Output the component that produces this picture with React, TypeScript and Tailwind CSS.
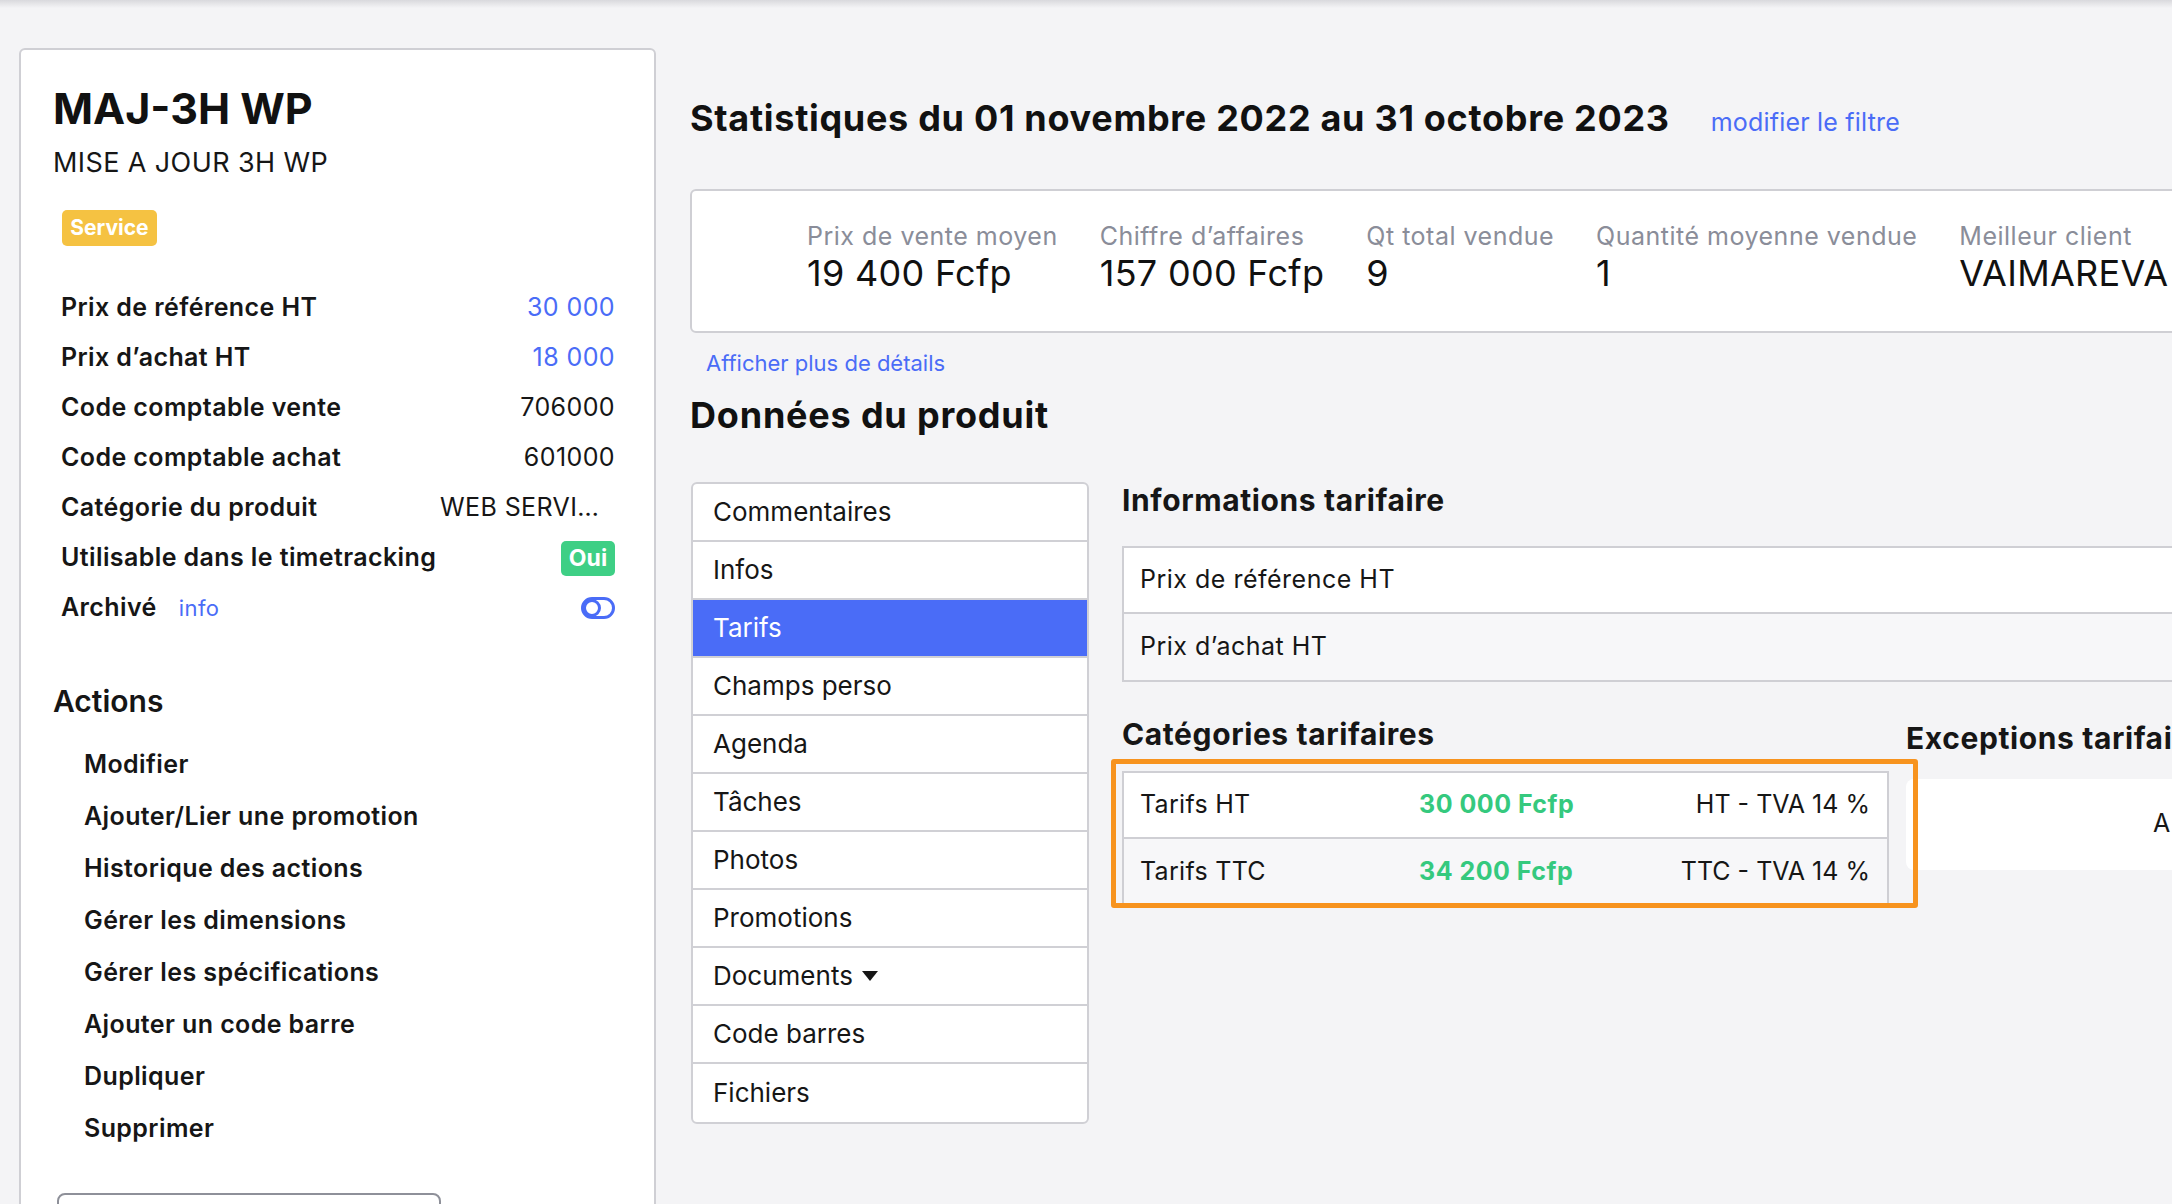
import React from "react";

const rows: { label: string; value: React.ReactNode }[] = [
  { label: "Prix de référence HT", value: <span className="text-[#4a6cf7]">30 000</span> },
  { label: "Prix d’achat HT", value: <span className="text-[#4a6cf7]">18 000</span> },
  { label: "Code comptable vente", value: <span>706000</span> },
  { label: "Code comptable achat", value: <span>601000</span> },
  {
    label: "Catégorie du produit",
    value: <span className="mr-[15px] block w-[160px] truncate">WEB SERVICES WORDPRESS</span>,
  },
  {
    label: "Utilisable dans le timetracking",
    value: (
      <span className="flex h-[35px] w-[54px] items-center justify-center rounded-[5px] bg-[#3ecf85] text-[23px] font-bold tracking-normal text-white">
        Oui
      </span>
    ),
  },
];

const actions = [
  "Modifier",
  "Ajouter/Lier une promotion",
  "Historique des actions",
  "Gérer les dimensions",
  "Gérer les spécifications",
  "Ajouter un code barre",
  "Dupliquer",
  "Supprimer",
];

const tabs = [
  "Commentaires",
  "Infos",
  "Tarifs",
  "Champs perso",
  "Agenda",
  "Tâches",
  "Photos",
  "Promotions",
  "Documents",
  "Code barres",
  "Fichiers",
];

const stats = [
  { label: "Prix de vente moyen", value: "19 400 Fcfp" },
  { label: "Chiffre d’affaires", value: "157 000 Fcfp" },
  { label: "Qt total vendue", value: "9" },
  { label: "Quantité moyenne vendue", value: "1" },
  { label: "Meilleur client", value: "VAIMAREVA" },
];

function Toggle() {
  return (
    <svg width="34" height="22" viewBox="0 0 34 22" fill="none">
      <rect x="1.5" y="1.5" width="31" height="19" rx="9.5" stroke="#4a6cf7" strokeWidth="3" />
      <circle cx="11" cy="11" r="7.5" stroke="#4a6cf7" strokeWidth="3" />
    </svg>
  );
}

function LeftCard() {
  return (
    <div className="w-[637px] shrink-0 rounded-[6px] border-2 border-[#cfcfd4] bg-white pb-[60px] pl-[32px] pr-[39px] pt-[32px]">
      <div className="text-[43px] font-bold leading-[52px] text-[#111]">MAJ-3H WP</div>
      <div className="mt-[12px] text-[27px] leading-[34px] tracking-[0.4px] text-[#161616]">MISE A JOUR 3H WP</div>
      <div className="ml-[9px] mt-[30px] flex h-[36px] w-[95px] items-center justify-center rounded-[5px] bg-[#f5c242] text-[21px] font-bold text-white">
        Service
      </div>
      <div className="ml-[8px] mt-[37px]">
        {rows.map((r) => (
          <div key={r.label} className="flex h-[50px] items-center justify-between text-[25px] tracking-[0.4px]">
            <span className="font-semibold">{r.label}</span>
            {r.value}
          </div>
        ))}
        <div className="flex h-[50px] items-center justify-between text-[25px] tracking-[0.4px]">
          <span className="flex items-baseline">
            <span className="font-semibold">Archivé</span>
            <span className="ml-[22px] text-[22px] text-[#4a6cf7]">info</span>
          </span>
          <Toggle />
        </div>
      </div>
      <div className="mt-[48px] text-[30px] font-semibold leading-[40px]">Actions</div>
      <div className="mt-[18px] pl-[31px]">
        {actions.map((a) => (
          <div key={a} className="flex h-[52px] items-center text-[25px] font-semibold tracking-[0.4px]">
            {a}
          </div>
        ))}
      </div>
      <div className="ml-[4px] mt-[38px] flex h-[44px] w-[384px] items-center rounded-[8px] border-2 border-[#8e9099] px-[14px] pt-[18px] text-[20px] text-[#9a9ca5]">
        ABONNEMENT ET MISE A JOUR
      </div>
    </div>
  );
}

function Tabs() {
  return (
    <div className="ml-[1px] w-[398px] shrink-0 self-start overflow-hidden rounded-[6px] border-2 border-[#d0d0d5] bg-white">
      {tabs.map((t, i) => (
        <div
          key={t}
          className={
            "flex h-[58px] items-center pl-[20px] text-[26px] " +
            (i < tabs.length - 1 ? "border-b-2 border-[#d0d0d5] " : "") +
            (t === "Tarifs" ? "bg-[#4a6cf7] text-white" : "text-[#161616]")
          }
        >
          {t}
          {t === "Documents" && (
            <svg className="ml-[9px]" width="16" height="10" viewBox="0 0 16 10">
              <path d="M0 0 L16 0 L8 10 Z" fill="#161616" />
            </svg>
          )}
        </div>
      ))}
    </div>
  );
}

function PriceSection() {
  return (
    <div className="flex flex-col">
      <div className="text-[30px] font-bold leading-[36px] tracking-[0.6px]">Informations tarifaire</div>
      <div className="mt-[28px] w-[1200px] border-2 border-[#cfcfd4]">
        <div className="flex h-[66px] items-center border-b-2 border-[#cfcfd4] bg-white pl-[16px] text-[25px] tracking-[0.5px]">
          Prix de référence HT
        </div>
        <div className="flex h-[66px] items-center bg-[#f7f7f9] pl-[16px] text-[25px] tracking-[0.5px]">Prix d’achat HT</div>
      </div>
      <div className="mt-[34px] flex gap-[17px]">
        <div className="relative w-[767px] shrink-0">
          <div className="text-[30px] font-bold leading-[36px] tracking-[0.6px]">Catégories tarifaires</div>
          <div className="mt-[19px] border-2 border-[#cfcfd4]">
            <div className="flex h-[66px] items-center border-b-2 border-[#cfcfd4] bg-white pl-[16px] pr-[17px] text-[25px] tracking-[0.3px]">
              <span className="w-[279px]">Tarifs HT</span>
              <span className="flex-1 font-bold tracking-[0.5px] text-[#35c97e]">30 000 Fcfp</span>
              <span className="tracking-normal">HT - TVA 14 %</span>
            </div>
            <div className="flex h-[66px] items-center bg-[#f7f7f9] pl-[16px] pr-[17px] text-[25px] tracking-[0.3px]">
              <span className="w-[279px]">Tarifs TTC</span>
              <span className="flex-1 font-bold tracking-[0.5px] text-[#35c97e]">34 200 Fcfp</span>
              <span className="tracking-normal">TTC - TVA 14 %</span>
            </div>
          </div>
          <div className="pointer-events-none absolute left-[-11px] top-[43px] h-[149px] w-[807px] rounded-[3px] border-[5px] border-[#f7931e]" />
        </div>
        <div className="min-w-0 flex-1">
          <div className="mt-[4px] whitespace-nowrap text-[30px] font-bold leading-[36px] tracking-[0.6px]">Exceptions tarifaires</div>
          <div className="mt-[23px] flex h-[91px] w-[800px] items-center rounded-[8px] bg-white pl-[247px] text-[25px] tracking-[0.5px]">
            <span className="whitespace-nowrap">Aucune exception tarifaire</span>
          </div>
        </div>
      </div>
    </div>
  );
}

function Main() {
  return (
    <div className="flex shrink-0 flex-col pt-[48px]">
      <div className="flex items-baseline">
        <div className="whitespace-nowrap text-[36px] font-bold leading-[44px] tracking-[0.7px] text-[#111]">
          Statistiques du 01 novembre 2022 au 31 octobre 2023
        </div>
        <div className="ml-[41px] whitespace-nowrap text-[25px] tracking-[0.2px] text-[#4a6cf7]">modifier le filtre</div>
      </div>
      <div className="mt-[47px] flex h-[144px] w-[1700px] items-center gap-[42px] rounded-l-[6px] border-2 border-[#cfcfd4] bg-white pb-[6px] pl-[115px]">
        {stats.map((s) => (
          <div key={s.label} className="flex flex-col whitespace-nowrap">
            <span className="text-[25px] leading-[30px] tracking-[0.5px] text-[#8a8d99]">{s.label}</span>
            <span className="text-[36px] leading-[44px] tracking-[0.3px] text-[#111]">{s.value}</span>
          </div>
        ))}
      </div>
      <div className="ml-[16px] mt-[16px] text-[22px] leading-[28px] text-[#4a6cf7]">Afficher plus de détails</div>
      <div className="mt-[17px] text-[36px] font-bold leading-[42px] tracking-[0.8px] text-[#111]">Données du produit</div>
      <div className="mt-[46px] flex items-start gap-[33px]">
        <Tabs />
        <PriceSection />
      </div>
    </div>
  );
}

export default function App() {
  return (
    <div className="relative h-[1204px] w-[2172px] overflow-hidden bg-[#f4f4f6] font-['Inter',sans-serif] text-[#161616]">
      <div className="h-[8px] bg-gradient-to-b from-[#d9d9dd] to-[#f4f4f6]" />
      <div className="flex items-start gap-[34px] pl-[19px] pt-[40px]">
        <LeftCard />
        <Main />
      </div>
    </div>
  );
}
